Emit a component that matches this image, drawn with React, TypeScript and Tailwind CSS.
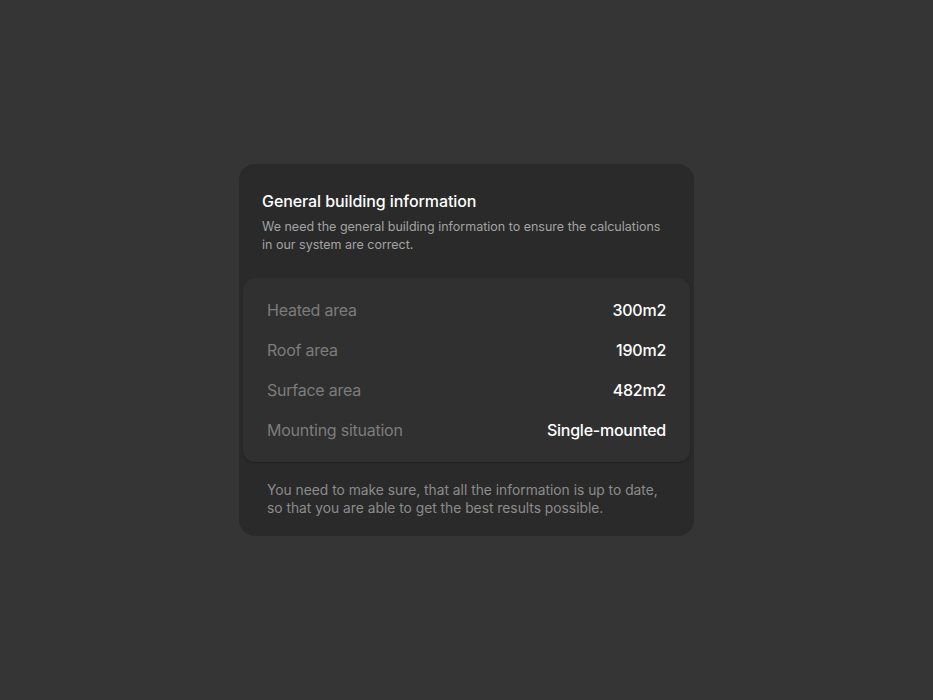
import React from 'react';

const rows = [
  { label: 'Heated area', value: '300m2' },
  { label: 'Roof area', value: '190m2' },
  { label: 'Surface area', value: '482m2' },
  { label: 'Mounting situation', value: 'Single-mounted' },
];

const App: React.FC = () => {
  return (
    <div className="min-h-screen w-full flex items-center justify-center bg-[#353535] font-['Inter',sans-serif]">
      <div className="w-[455px] rounded-2xl bg-[#2a2a2a] p-1">
        {/* Header */}
        <div className="px-[19px] pt-[21px] pb-[24px]">
          <h1 className="text-[16px] leading-6 font-medium text-white tracking-[-0.005em]">General building information</h1>
          <p className="mt-[5px] text-[12.5px] leading-[18px] text-[#a3a3a3]">
            We need the general building information to ensure the calculations in our system are correct.
          </p>
        </div>

        {/* Details */}
        <div className="rounded-xl bg-[#303030] px-6 py-3 shadow-[0_1px_2px_rgba(0,0,0,0.25)]">
          {rows.map((r) => (
            <div key={r.label} className="flex h-10 items-center justify-between text-[16px] tracking-[-0.015em]">
              <span className="text-[#7c7c7c]">{r.label}</span>
              <span className="font-medium text-white">{r.value}</span>
            </div>
          ))}
        </div>

        {/* Footer */}
        <p className="px-6 pt-[19px] pb-[15px] text-[13.8px] leading-[18px] text-[#8c8c8c]">
          You need to make sure, that all the information is up to date, so that you are able to get the best results possible.
        </p>
      </div>
    </div>
  );
};

export default App;
